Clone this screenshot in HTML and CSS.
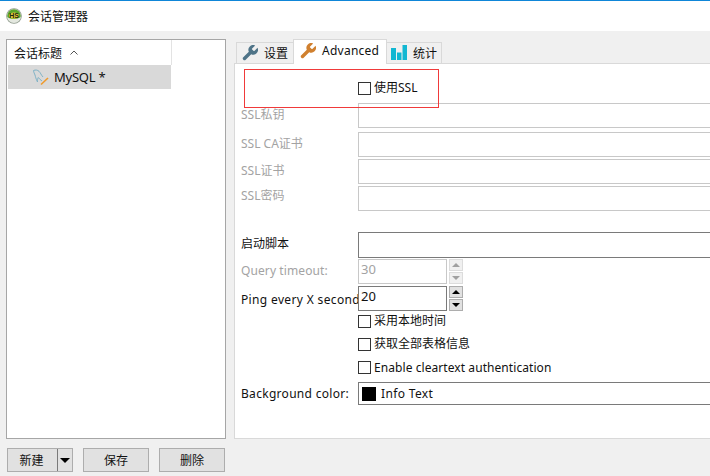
FILE: index.html
```html
<!DOCTYPE html>
<html lang="zh">
<head>
<meta charset="utf-8">
<title>会话管理器</title>
<link rel="stylesheet" href="styles.css">
</head>
<body>
<div class="accent"></div>
<header class="titlebar">
  <svg class="logo" viewBox="0 0 16 16" width="16" height="16">
    <circle cx="8" cy="8" r="7.8" fill="#8f9a8c"/>
    <circle cx="8" cy="8" r="7" fill="#e4e8e0"/>
    <path d="M1.2 8a6.8 6.8 0 0 1 13.6 0c0 1.6-3 3-6.8 3s-6.800-1.400-6.800-3z" fill="#5aa62a"/>
    <ellipse cx="8" cy="7.600" rx="5" ry="3" fill="#e8c93a"/>
    <text x="8" y="10" text-anchor="middle" class="logo-text">HS</text>
  </svg>
  <span class="title">会话管理器</span>
</header>
<main class="main">
  <section class="left">
    <div class="sessions">
      <div class="list">
        <div class="list-head"><span>会话标题</span>
          <svg class="chev" viewBox="0 0 8 5" width="8" height="5"><path d="M.5 4.500 4 1l3.500 3.500" fill="none" stroke="#555"/></svg>
        </div>
        <div class="list-row">
          <svg class="dolphin" viewBox="0 0 16 17" width="16" height="17">
            <path d="M.5 1.500c2-.8 4-.6 5.500.8 1.500 1.500 2 3.500 4 5.700M.5 1.500c.2 2 1 3 1.500 4.500.5 1.700.8 3.500 2.500 7 0-2 0-3.500.8-4.500 1 1.500 2.500 2.500 3.700 3.500" fill="none" stroke="#7fb2c6" stroke-width="1"/>
            <path d="M8 15.500 15 9" fill="none" stroke="#ef9a2c" stroke-width="1.600"/>
          </svg>
          <span class="row-name">MySQL *</span>
        </div>
      </div>
    </div>
    <div class="actions">
      <button class="btn split"><span class="split-label">新建</span><span class="split-sep"></span><span class="split-arrow"></span></button>
      <button class="btn">保存</button>
      <button class="btn">删除</button>
    </div>
  </section>
  <section class="right">
    <nav class="tabs">
      <div class="tab tab-first">
        <svg class="ico" viewBox="2 2 20 20" width="16" height="16"><path fill="#4f7488" d="M14.700 6.300a1 1 0 0 0 0 1.400l1.600 1.600a1 1 0 0 0 1.400 0l3.770-3.770a6 6 0 0 1-7.940 7.940l-6.910 6.910a2.120 2.120 0 0 1-3-3l6.910-6.910a6 6 0 0 1 7.940-7.940l-3.760 3.760z"/></svg>
        <span>设置</span>
      </div>
      <div class="tab tab-active">
        <svg class="ico" viewBox="2 2 20 20" width="16" height="16"><path fill="#d0802f" d="M14.700 6.300a1 1 0 0 0 0 1.400l1.600 1.600a1 1 0 0 0 1.400 0l3.770-3.770a6 6 0 0 1-7.940 7.940l-6.910 6.910a2.120 2.120 0 0 1-3-3l6.910-6.910a6 6 0 0 1 7.940-7.940l-3.760 3.760z"/></svg>
        <span class="sp-adv">Advanced</span>
      </div>
      <div class="tab tab-last">
        <svg class="ico" viewBox="0 0 16 16" width="16" height="16"><path fill="#12b7d2" d="M0 3h5v12H0zM6 7.500h4.500V15H6zM11.500 0H16v15h-4.500z"/></svg>
        <span>统计</span>
      </div>
    </nav>
    <div class="pane">
      <div class="highlight"></div>
      <div class="row row-ssl"><span class="label"></span><label class="check raised"><i class="box"></i>使用SSL</label></div>
      <div class="row row-input"><span class="label off lift4">SSL私钥</span><div class="field off"></div></div>
      <div class="row row-input gap4"><span class="label off lift4">SSL CA证书</span><div class="field off"></div></div>
      <div class="row row-input gap2"><span class="label off lift4">SSL证书</span><div class="field off"></div></div>
      <div class="row row-input gap2"><span class="label off lift7">SSL密码</span><div class="field off"></div></div>
      <div class="row row-script"><span class="label lift4">启动脚本</span><div class="field"></div></div>
      <div class="row row-input tight"><span class="label off sp-query lift2">Query timeout:</span>
        <div class="spinner"><div class="field off num">30</div>
          <div class="spins off"><span class="spin"><i class="up"></i></span><span class="spin"><i class="down"></i></span></div></div>
      </div>
      <div class="row row-input gap2"><span class="label sp-ping">Ping every X second</span>
        <div class="spinner"><div class="field num">20</div>
          <div class="spins"><span class="spin"><i class="up"></i></span><span class="spin"><i class="down"></i></span></div></div>
      </div>
      <div class="row row-check first"><span class="label"></span><label class="check raised"><i class="box"></i>采用本地时间</label></div>
      <div class="row row-check"><span class="label"></span><label class="check raised"><i class="box"></i>获取全部表格信息</label></div>
      <div class="row row-check"><span class="label"></span><label class="check sp-enable"><i class="box"></i>Enable cleartext authentication</label></div>
      <div class="row row-combo"><span class="label sp-bg">Background color:</span>
        <div class="combo"><i class="swatch"></i><span class="sp-info">Info Text</span></div></div>
    </div>
  </section>
</main>
</body>
</html>
```
FILE: styles.css
```css
* { box-sizing: border-box; }
html, body { margin: 0; padding: 0; }
body {
  width: 710px;
  height: 476px;
  overflow: hidden;
  background: #f0f0f0;
  color: #111;
  font-family: "Noto Sans", "Noto Sans CJK SC", sans-serif;
  font-size: 12px;
  display: flex;
  flex-direction: column;
}
.accent { height: 1px; background: #0f86d8; flex: none; }
.titlebar {
  height: 30px;
  flex: none;
  background: #fff;
  display: flex;
  align-items: center;
  padding-left: 6px;
  gap: 6px;
}
.logo { flex: none; }
.logo-text { font: bold 7px "Liberation Sans", sans-serif; fill: #1d2a10; }
.title { font-size: 12px; }
.main {
  flex: 1;
  display: flex;
  gap: 8px;
  padding: 8px 0 0 6px;
  min-height: 0;
}
.left { width: 220px; flex: none; display: flex; flex-direction: column; }
.sessions {
  height: 400px;
  background: #fff;
  border: 1px solid #a6a6a6;
  padding-left: 1px;
}
.list { width: 163px; }
.list-head {
  height: 25px;
  padding-left: 6px;
  display: flex;
  align-items: center;
  gap: 8px;
  border-right: 1px solid #e3e3e3;
  margin-right: -1px;
}
.list-row {
  height: 24px;
  background: #d9d9d9;
  display: flex;
  align-items: center;
  padding-left: 25px;
  gap: 5px;
  font-size: 13px;
}
.row-name { letter-spacing: -.25px; }
.dolphin { flex: none; }
.actions { display: flex; gap: 10px; margin-top: 9px; padding-left: 1px; }
.btn {
  width: 66px;
  height: 24px;
  padding: 0;
  background: #e1e1e1;
  border: 1px solid #adadad;
  font: inherit;
  color: #111;
  display: flex;
  align-items: center;
  justify-content: center;
}
.split { justify-content: flex-start; }
.split-label { width: 49px; padding-right: 2px; text-align: center; }
.split-sep { width: 1px; height: 100%; background: #7a7a7a; }
.split-arrow {
  margin-left: 2px;
  border-left: 5px solid transparent;
  border-right: 5px solid transparent;
  border-top: 5px solid #000;
}
.right { width: 520px; flex: none; display: flex; flex-direction: column; }
.tabs { height: 25px; flex: none; display: flex; align-items: flex-end; padding-left: 2px; margin-bottom: -1px; }
.tab {
  display: flex;
  align-items: center;
  background: #f0f0f0;
  border: 1px solid #d9d9d9;
  height: 22px;
  gap: 6px;
}
.tab-first { width: 57px; padding-left: 5px; border-right: 0; }
.tab-active {
  width: 94px;
  height: 25px;
  padding: 0 0 3px 6px;
  background: #fff;
  border-bottom: 0;
  position: relative;
  z-index: 1;
}
.tab-last { width: 55px; padding-left: 4px; border-left: 0; }
.ico { flex: none; }
.sp-adv { letter-spacing: .25px; }
.pane {
  height: 376px;
  background: #fff;
  border: 1px solid #d9d9d9;
  padding: 0 0 0 6px;
  position: relative;
}
.highlight {
  position: absolute;
  left: 9px;
  top: 5px;
  width: 195px;
  height: 39px;
  border: 1px solid #f03a3a;
  pointer-events: none;
}
.row { display: flex; align-items: center; }
.label { width: 117px; flex: none; white-space: nowrap; }
.label.off { color: #a3a3a3; }
.lift2 { padding-bottom: 2px; }
.lift4 { padding-bottom: 4px; }
.lift7 { padding-bottom: 7px; }
.sp-query { letter-spacing: .1px; }
.sp-ping { letter-spacing: .35px; padding-top: 2px; }
.sp-bg { letter-spacing: .3px; }
.sp-info { letter-spacing: .35px; }
.sp-enable { letter-spacing: .07px; }
.row-ssl { height: 39px; padding-top: 18px; align-items: flex-start; }
.row-input { height: 25px; }
.gap4 { margin-top: 4px; }
.gap2 { margin-top: 2px; }
.row-script { height: 26px; margin-top: 21px; }
.tight { margin-top: 1px; }
.field {
  flex: 1;
  height: 100%;
  border: 1px solid #7a7a7a;
  background: #fff;
}
.field.off { border-color: #c8c8c8; }
.spinner { display: flex; height: 100%; gap: 2px; }
.num { width: 89px; flex: none; padding-left: 2px; line-height: 19px; font-size: 13px; }
.num.off { color: #a3a3a3; }
.spins { width: 14px; display: flex; flex-direction: column; gap: 1px; }
.spin {
  flex: 1;
  background: #e1e1e1;
  border: 1px solid #adadad;
  display: flex;
  align-items: center;
  justify-content: center;
}
.spins.off .spin { background: #f0f0f0; border-color: #dcdcdc; }
.spin i { width: 0; height: 0; border-left: 4px solid transparent; border-right: 4px solid transparent; }
.spin .up { border-bottom: 4px solid #000; }
.spin .down { border-top: 4px solid #000; }
.spins.off .up { border-bottom-color: #a0a0a0; }
.spins.off .down { border-top-color: #a0a0a0; }
.check { display: flex; align-items: center; gap: 3px; height: 13px; white-space: nowrap; }
.check.raised { align-items: flex-start; line-height: 11px; }
.box { width: 13px; height: 13px; flex: none; background: #fff; border: 1px solid #333; }
.row-check { height: 13px; margin-top: 10px; }
.row-check.first { margin-top: 4px; }
.row-combo { height: 23px; margin-top: 8px; }
.combo {
  flex: 1;
  height: 100%;
  border: 1px solid #7a7a7a;
  display: flex;
  align-items: center;
  padding-left: 3px;
  gap: 5px;
}
.swatch { width: 14px; height: 14px; background: #000; flex: none; }
```
